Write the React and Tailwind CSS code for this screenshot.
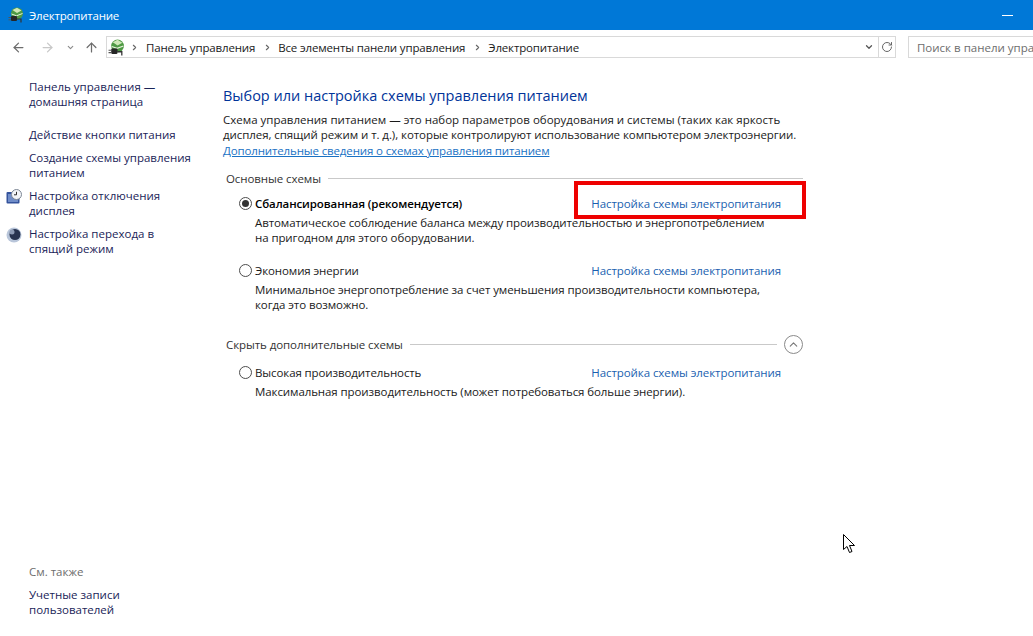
import { ArrowLeft, ArrowRight, ArrowUp, ChevronDown, ChevronRight, ChevronUp, RotateCw } from 'lucide-react'

const PowerIcon = ({ className }) => (
  <svg viewBox="0 0 16 16" className={className}>
    <circle cx="9" cy="6.5" r="6" fill="#4f9a45" />
    <path d="M4.5 3 L9 0.8 L13.5 3.5 L9 6 Z" fill="#cfe8b8" />
    <path d="M3.5 7 L8.5 8.8 L14.5 6.5" stroke="#e7f3dc" strokeWidth="1" fill="none" />
    <rect x="3" y="9" width="6" height="5" rx="1" fill="#262626" />
    <path d="M9 12 H13 V15.5" stroke="#333333" strokeWidth="1.2" fill="none" />
    <path d="M0.5 10.5 H3 M0.5 12.8 H3" stroke="#555555" strokeWidth="1" />
  </svg>
)

const ClockMonitorIcon = () => (
  <svg viewBox="0 0 16 16" className="w-4 h-4 shrink-0">
    <rect x="0.5" y="3" width="13" height="11.5" rx="1" fill="#34539c" />
    <rect x="2" y="5" width="10" height="8" fill="#6f8cc8" />
    <circle cx="10.5" cy="5.5" r="5" fill="#f2f4f8" stroke="#7d8795" />
    <path d="M10.5 2.8 V5.8 H8" stroke="#2d2d2d" strokeWidth="1" fill="none" />
  </svg>
)

const SleepIcon = () => (
  <svg viewBox="0 0 16 16" className="w-4 h-4 shrink-0">
    <circle cx="8" cy="8" r="7.5" fill="#b9c6da" />
    <circle cx="9" cy="7.5" r="5.5" fill="#27324f" />
    <circle cx="6" cy="5" r="2.5" fill="#8d9ab5" />
  </svg>
)

const SideLink = ({ icon, children, className = '' }) => (
  <div className={`flex ${className}`}>
    <div className="w-[29px] pl-[6px] shrink-0 pt-[1px]">{icon}</div>
    <a className="block w-[165px] text-[#1a2458]">{children}</a>
  </div>
)

const Radio = ({ checked }) => (
  <span className="w-[13px] h-[13px] rounded-full border border-[#4d4d4d] bg-white flex items-center justify-center shrink-0">
    {checked && <span className="w-[7px] h-[7px] rounded-full bg-[#333333]" />}
  </span>
)

const Plan = ({ name, checked, children, className = '' }) => (
  <div className={`pl-[16px] w-[558px] ${className}`}>
    <div className="flex items-center justify-between">
      <div className={`flex items-center gap-[3px] tracking-[-0.1px] ${checked ? 'font-semibold text-black' : 'text-[#1a1a1a]'}`}>
        <Radio checked={checked} />
        {name}
      </div>
      <a className="text-[#1a5fb0] tracking-[-0.07px]">Настройка схемы электропитания</a>
    </div>
    <p className="pl-[16px] mt-[4px] text-[#1a1a1a] whitespace-nowrap tracking-[-0.09px]">{children}</p>
  </div>
)

const SectionTitle = ({ children, right, className = '' }) => (
  <div className={`flex items-center gap-[7px] w-[580px] pl-[3px] ${className}`}>
    <span className="text-[#333333] tracking-[-0.08px]">{children}</span>
    <span className="flex-1 h-px bg-[#c9c9c9]" />
    {right}
  </div>
)

export default function App() {
  return (
    <div className="relative w-[1033px] h-[636px] overflow-hidden bg-white text-[11.5px] leading-[15px]" style={{ fontFamily: '"Open Sans", "Noto Sans", sans-serif' }}>
      {/* Title bar */}
      <div className="h-[30px] bg-[#0078d7] flex items-center pl-[8px] pr-[20px] text-white">
        <PowerIcon className="w-4 h-4" />
        <span className="ml-[5px] tracking-[-0.2px]">Электропитание</span>
        <span className="ml-auto w-[11px] h-px bg-white" />
      </div>

      {/* Address bar */}
      <div className="h-[34px] flex items-center text-[#7a7a7a]">
        <ArrowLeft className="w-[15px] h-[15px] ml-[11px] text-[#6d6d6d]" />
        <ArrowRight className="w-[15px] h-[15px] ml-[14px] text-[#c8c8c8]" />
        <ChevronDown className="w-[9px] h-[9px] ml-[11px] text-[#8a8a8a]" strokeWidth={3} />
        <ArrowUp className="w-[15px] h-[15px] ml-[9px] text-[#6d6d6d]" />
        <div className="ml-[7px] w-[790px] h-[22px] border border-[#d9d9d9] flex items-center">
          <PowerIcon className="w-[17px] h-[17px] ml-[1px]" />
          <ChevronRight className="w-[9px] h-[9px] ml-[5px] text-[#666666]" strokeWidth={3} />
          <span className="ml-[7px] text-[#1a1a1a] tracking-[-0.15px]">Панель управления</span>
          <ChevronRight className="w-[9px] h-[9px] ml-[8px] text-[#666666]" strokeWidth={3} />
          <span className="ml-[6px] text-[#1a1a1a] tracking-[-0.15px]">Все элементы панели управления</span>
          <ChevronRight className="w-[9px] h-[9px] ml-[8px] text-[#666666]" strokeWidth={3} />
          <span className="ml-[6px] text-[#1a1a1a] tracking-[-0.15px]">Электропитание</span>
          <ChevronDown className="w-[10px] h-[10px] ml-auto mr-[4px] text-[#555555]" strokeWidth={3} />
          <div className="w-[17px] h-full border-l border-[#d9d9d9] flex items-center justify-center">
            <RotateCw className="w-[12px] h-[12px] text-[#666666]" />
          </div>
        </div>
        <div className="ml-[12px] flex-1 h-[22px] border border-r-0 border-[#d9d9d9] pl-[8px] flex items-center text-[#6d6d6d] whitespace-nowrap overflow-hidden">
          Поиск в панели упра
        </div>
      </div>

      <div className="flex h-[572px]">
        {/* Sidebar */}
        <aside className="w-[223px] shrink-0 flex flex-col pt-[15px] pb-[19px]">
          <SideLink>Панель управления — домашняя страница</SideLink>
          <SideLink className="mt-[18px]">Действие кнопки питания</SideLink>
          <SideLink className="mt-[8px]">Создание схемы управления питанием</SideLink>
          <SideLink className="mt-[8px]" icon={<ClockMonitorIcon />}>Настройка отключения дисплея</SideLink>
          <SideLink className="mt-[8px]" icon={<SleepIcon />}>Настройка перехода в спящий режим</SideLink>
          <div className="mt-auto pl-[29px]">
            <p className="text-[#6d6d6d]">См. также</p>
            <a className="block mt-[8px] w-[110px] text-[#1a2458]">Учетные записи пользователей</a>
          </div>
        </aside>

        {/* Main */}
        <main className="flex-1 pt-[22px]">
          <h1 className="text-[14.5px] leading-[20px] text-[#003399]">Выбор или настройка схемы управления питанием</h1>
          <p className="mt-[6px] text-[#1a1a1a] whitespace-nowrap">
            Схема управления питанием — это набор параметров оборудования и системы (таких как яркость<br />
            <span className="tracking-[-0.07px]">дисплея, спящий режим и т. д.), которые контролируют использование компьютером электроэнергии.</span>
          </p>
          <a className="block mt-[1px] text-[#1a72c4] underline tracking-[-0.14px]">Дополнительные сведения о схемах управления питанием</a>

          <SectionTitle className="mt-[13px]">Основные схемы</SectionTitle>
          <Plan checked name="Сбалансированная (рекомендуется)" className="mt-[10px]">
            Автоматическое соблюдение баланса между производительностью и энергопотреблением<br />
            на пригодном для этого оборудовании.
          </Plan>
          <Plan name="Экономия энергии" className="mt-[18px]">
            Минимальное энергопотребление за счет уменьшения производительности компьютера,<br />
            когда это возможно.
          </Plan>

          <SectionTitle
            className="mt-[23px]"
            right={
              <span className="w-[19px] h-[19px] rounded-full border border-[#8a8a8a] flex items-center justify-center">
                <ChevronUp className="w-[13px] h-[13px] text-[#777777]" />
              </span>
            }
          >
            Скрыть дополнительные схемы
          </SectionTitle>
          <Plan name="Высокая производительность" className="mt-[11px]">
            Максимальная производительность (может потребоваться больше энергии).
          </Plan>
        </main>
      </div>

      {/* Red annotation box */}
      <div className="absolute left-[574px] top-[181px] w-[232px] h-[38px] border-[4px] border-[#ee0000]" />

      {/* Mouse cursor */}
      <svg viewBox="0 0 13 20" className="absolute left-[843px] top-[534px] w-[13px] h-[20px]">
        <path d="M0.5 0.5 V15.5 L4 12.5 L6.5 18.5 L9 17.5 L6.5 11.5 H11.5 Z" fill="white" stroke="black" strokeWidth="1" />
      </svg>
    </div>
  )
}
